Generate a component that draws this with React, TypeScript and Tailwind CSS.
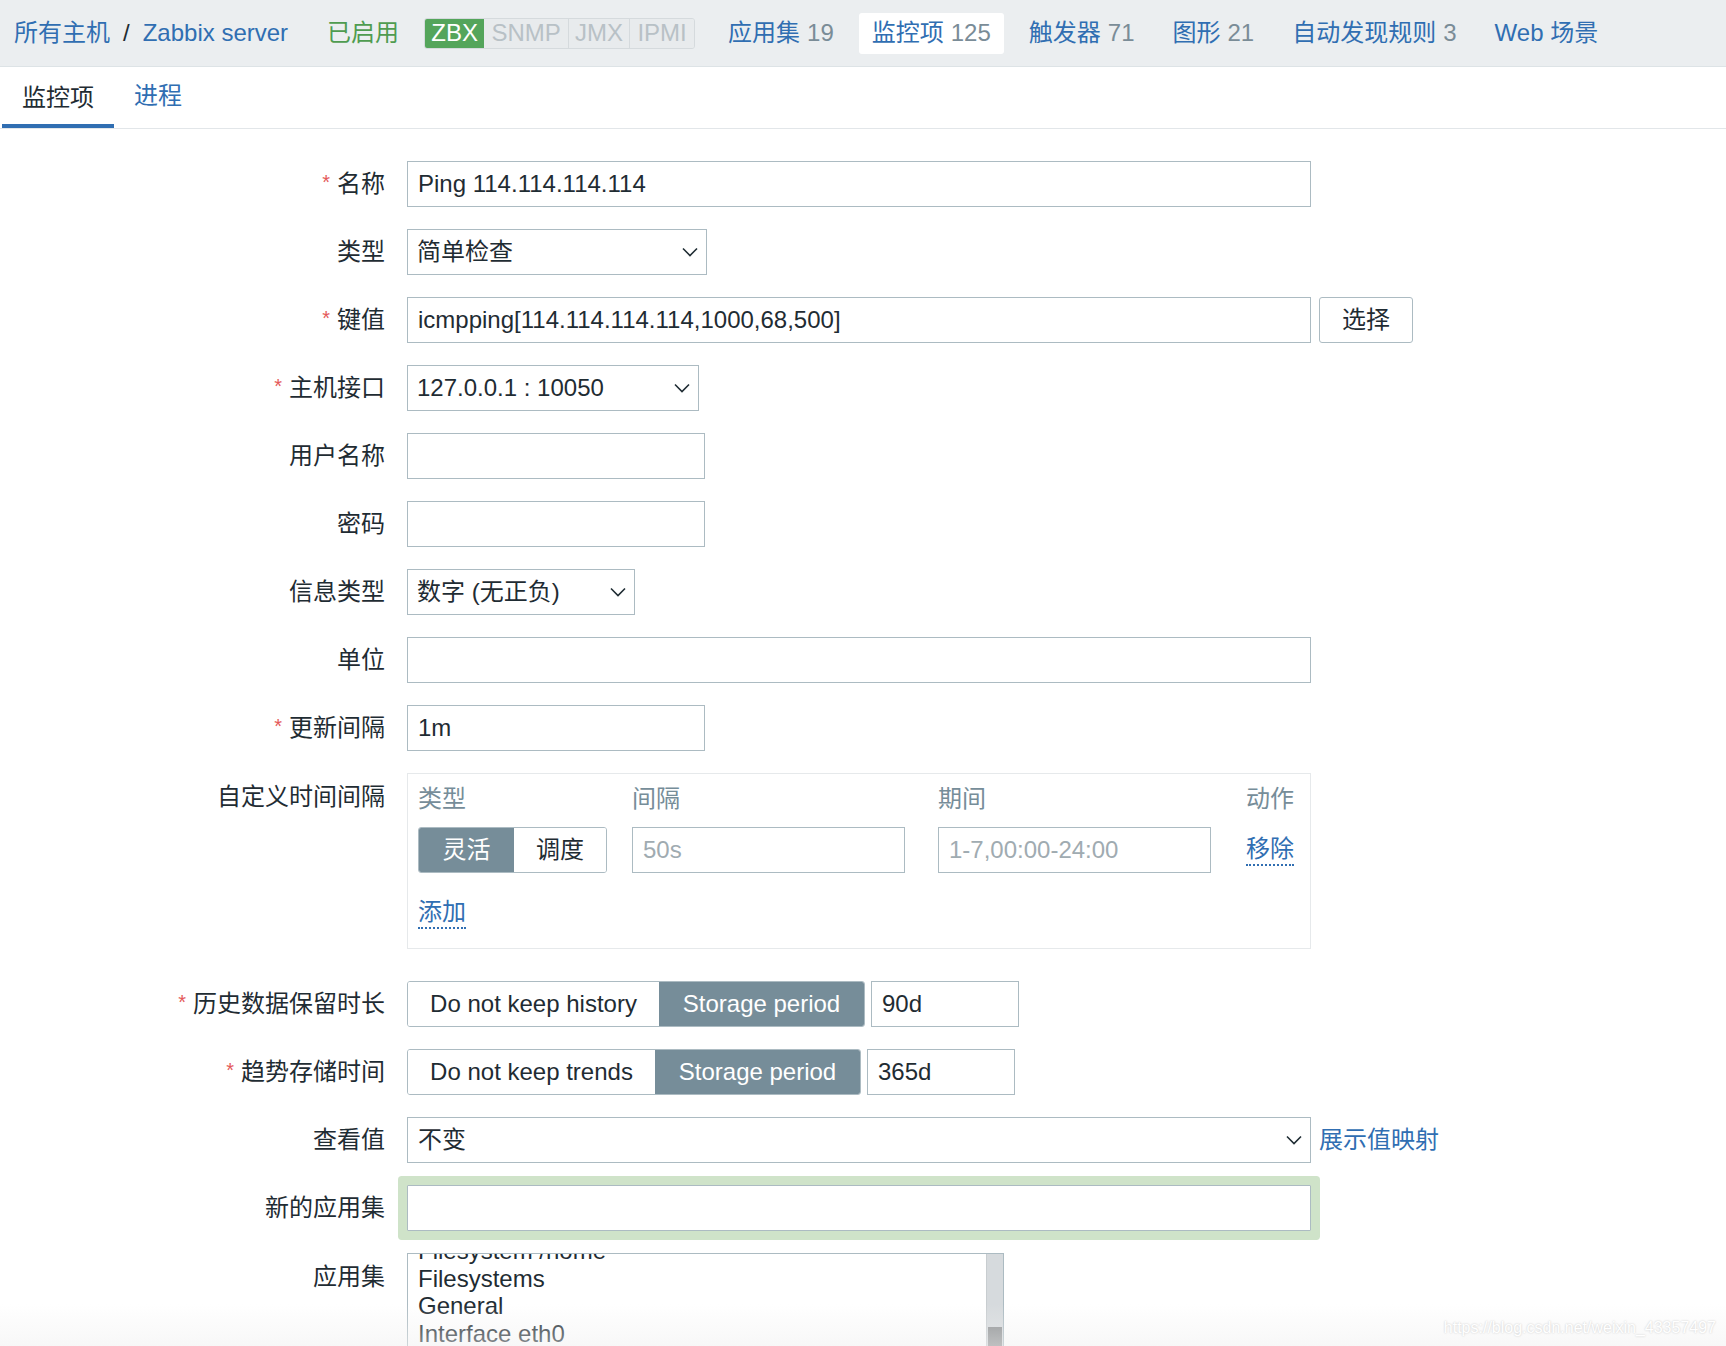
import React from 'react';

const BLUE = 'text-[#306eb2]';

function Chevron() {
  return (
    <svg width="16" height="10" viewBox="0 0 16 10" className="shrink-0">
      <polyline points="1,1.5 8,8.5 15,1.5" fill="none" stroke="#1f2c33" strokeWidth="1.6" />
    </svg>
  );
}

function Star() {
  return <span className="text-[#e45959] mr-[7px] text-[20px] relative -top-[3px]">*</span>;
}

function Row({ label, required, children, top, className = '' }: { label: string; required?: boolean; children: React.ReactNode; top?: boolean; className?: string }) {
  return (
    <div className={`flex ${top ? 'items-start' : 'items-center'} mb-[22px] ${className}`}>
      <div className={`w-[385px] shrink-0 text-right text-[#1f2c33] ${top ? 'pt-[10px]' : ''}`}>
        {required && <Star />}
        {label}
      </div>
      <div className="ml-[22px] flex items-center">{children}</div>
    </div>
  );
}

function Input({ w, value = '', placeholder }: { w: string; value?: string; placeholder?: string }) {
  return (
    <div className={`${w} h-[46px] border border-[#acbbc2] bg-white flex items-center px-[10px] text-[#1f2c33] whitespace-nowrap overflow-hidden`}>
      {value ? value : <span className="text-[#a0abb1]">{placeholder}</span>}
    </div>
  );
}

function Select({ w, value }: { w: string; value: string }) {
  return (
    <div className={`${w} h-[46px] border border-[#acbbc2] bg-white flex items-center justify-between pl-[9px] pr-[8px] text-[#1f2c33]`}>
      <span>{value}</span>
      <Chevron />
    </div>
  );
}

function Segmented({ left, right, leftW, rightW }: { left: string; right: string; leftW: string; rightW: string }) {
  return (
    <div className="flex h-[46px] rounded-[3px] border border-[#acbbc2] overflow-hidden">
      <div className={`${leftW} flex items-center justify-center bg-white text-[#1f2c33]`}>{left}</div>
      <div className={`${rightW} flex items-center justify-center bg-[#768d99] text-white`}>{right}</div>
    </div>
  );
}

export default function App() {
  const navItems = [
    { name: '应用集', count: '19' },
    { name: '监控项', count: '125', active: true },
    { name: '触发器', count: '71' },
    { name: '图形', count: '21' },
    { name: '自动发现规则', count: '3' },
    { name: 'Web 场景', count: '' },
  ];

  return (
    <div className="relative w-[1726px] h-[1346px] overflow-hidden bg-white text-[24px] leading-[28px] font-['Liberation_Sans','Noto_Sans_CJK_SC',sans-serif]">
      {/* header bar */}
      <div className="h-[67px] bg-[#ebeef0] border-b border-[#dde3e6] flex items-center pl-[14px]">
        <span className={BLUE}>所有主机</span>
        <span className="mx-[13px] text-[#1f2c33]">/</span>
        <span className={BLUE}>Zabbix server</span>
        <span className="ml-[39px] text-[#4f9c50]">已启用</span>
        <div className="ml-[25px] flex h-[31px] rounded-[3px] overflow-hidden border border-[#d5dadd] text-[#b8c1c6]">
          <div className="w-[59px] bg-[#54a55b] text-white flex items-center justify-center">ZBX</div>
          <div className="w-[84px] bg-[#e8ebed] flex items-center justify-center">SNMP</div>
          <div className="w-[61px] bg-[#e8ebed] border-l border-[#d5dadd] flex items-center justify-center">JMX</div>
          <div className="w-[65px] bg-[#e8ebed] border-l border-[#d5dadd] flex items-center justify-center">IPMI</div>
        </div>
        <div className="ml-[20px] flex items-center gap-[12px]">
          {navItems.map((n) => (
            <div
              key={n.name}
              className={`h-[41px] px-[13px] flex items-center rounded-[3px] ${n.active ? 'bg-white' : ''}`}
            >
              <span className={BLUE}>{n.name}</span>
              {n.count && <span className="ml-[7px] text-[#7a8c97]">{n.count}</span>}
            </div>
          ))}
        </div>
      </div>

      {/* tabs */}
      <div className="h-[62px] border-b border-[#e2e6e9] flex pl-[2px]">
        <div className="px-[20px] flex items-center border-b-4 border-[#306eb2] text-[#1f2c33] pt-[4px]">监控项</div>
        <div className={`px-[20px] flex items-center pb-[4px] ${BLUE}`}>进程</div>
      </div>

      {/* form */}
      <div className="pt-[32px]">
        <Row label="名称" required>
          <Input w="w-[904px]" value="Ping 114.114.114.114" />
        </Row>
        <Row label="类型">
          <Select w="w-[300px]" value="简单检查" />
        </Row>
        <Row label="键值" required>
          <Input w="w-[904px]" value="icmpping[114.114.114.114,1000,68,500]" />
          <div className="ml-[8px] w-[94px] h-[46px] border border-[#acbbc2] rounded-[3px] bg-white flex items-center justify-center text-[#1f2c33]">选择</div>
        </Row>
        <Row label="主机接口" required>
          <Select w="w-[292px]" value="127.0.0.1 : 10050" />
        </Row>
        <Row label="用户名称">
          <Input w="w-[298px]" />
        </Row>
        <Row label="密码">
          <Input w="w-[298px]" />
        </Row>
        <Row label="信息类型">
          <Select w="w-[228px]" value="数字 (无正负)" />
        </Row>
        <Row label="单位">
          <Input w="w-[904px]" />
        </Row>
        <Row label="更新间隔" required>
          <Input w="w-[298px]" value="1m" />
        </Row>

        <Row label="自定义时间间隔" top className="!mb-[32px]">
          <div className="w-[904px] h-[176px] border border-[#e6e9eb] pt-[11px] pl-[10px] pr-[8px]">
            <div className="flex h-[28px] text-[#768d99] whitespace-nowrap">
              <div className="w-[214px]">类型</div>
              <div className="w-[306px]">间隔</div>
              <div className="w-[308px]">期间</div>
              <div>动作</div>
            </div>
            <div className="flex items-center mt-[14px] whitespace-nowrap">
              <div className="w-[214px]">
                <div className="flex w-[189px] h-[46px] rounded-[3px] border border-[#acbbc2] overflow-hidden">
                  <div className="w-[95px] bg-[#768d99] text-white flex items-center justify-center">灵活</div>
                  <div className="flex-1 bg-white text-[#1f2c33] flex items-center justify-center">调度</div>
                </div>
              </div>
              <div className="w-[306px]">
                <Input w="w-[273px]" placeholder="50s" />
              </div>
              <div className="w-[308px]">
                <Input w="w-[273px]" placeholder="1-7,00:00-24:00" />
              </div>
              <span className={`${BLUE} border-b-2 border-dotted border-[#306eb2] leading-[30px]`}>移除</span>
            </div>
            <div className="mt-[24px]">
              <span className={`${BLUE} border-b-2 border-dotted border-[#306eb2] leading-[30px] inline-block`}>添加</span>
            </div>
          </div>
        </Row>

        <Row label="历史数据保留时长" required>
          <Segmented left="Do not keep history" right="Storage period" leftW="w-[251px]" rightW="w-[205px]" />
          <div className="ml-[6px]">
            <Input w="w-[148px]" value="90d" />
          </div>
        </Row>
        <Row label="趋势存储时间" required>
          <Segmented left="Do not keep trends" right="Storage period" leftW="w-[247px]" rightW="w-[205px]" />
          <div className="ml-[6px]">
            <Input w="w-[148px]" value="365d" />
          </div>
        </Row>
        <Row label="查看值">
          <div className="w-[904px] h-[46px] border border-[#acbbc2] bg-white flex items-center justify-between pl-[10px] pr-[8px] text-[#1f2c33]">
            <span>不变</span>
            <Chevron />
          </div>
          <span className={`ml-[8px] ${BLUE}`}>展示值映射</span>
        </Row>
        <Row label="新的应用集">
          <div className="w-[904px] h-[46px] border border-[#acbbc2] bg-white rounded-[1px] shadow-[0_0_0_9px_#cfe3c9]" />
        </Row>
        <Row label="应用集" top>
          <div className="w-[597px] h-[140px] border border-[#acbbc2] bg-white flex overflow-hidden">
            <div className="flex-1 pl-[10px] overflow-hidden text-[#1f2c33] leading-[27.5px]">
              <div className="-mt-[17px]">
                <div>Filesystem /home</div>
                <div>Filesystems</div>
                <div>General</div>
                <div>Interface eth0</div>
                <div>Memory</div>
              </div>
            </div>
            <div className="w-[17px] bg-[#d6dadd] border-l border-[#c8cdd0]">
              <div className="mt-[73px] h-[60px] mx-[1px] bg-[#8c8f91]" />
            </div>
          </div>
        </Row>
      </div>

      {/* watermark overlay */}
      <div className="pointer-events-none absolute left-0 right-0 bottom-0 h-[42px] bg-gradient-to-b from-transparent to-[#f0f0f0]/50" />
      <div className="pointer-events-none absolute right-[10px] bottom-[9px] text-[16px] leading-[18px] text-white font-['Liberation_Sans',sans-serif] [text-shadow:0_0_2px_#c4c4c4]">
        https://blog.csdn.net/weixin_43357497
      </div>
    </div>
  );
}
